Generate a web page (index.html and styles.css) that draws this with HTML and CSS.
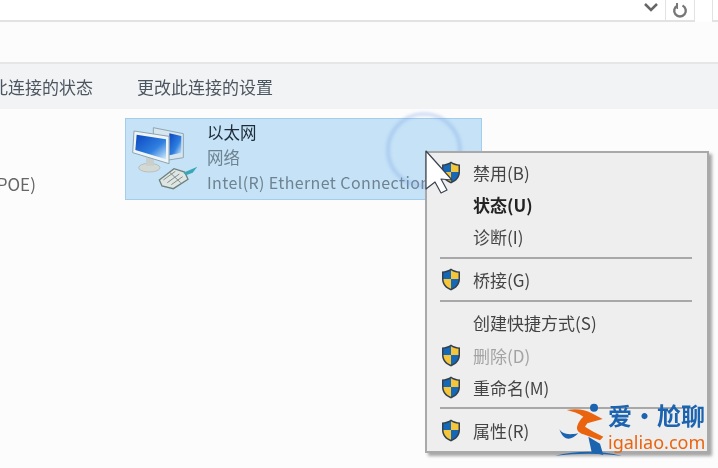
FILE: index.html
```html
<!DOCTYPE html>
<html>

<head>
    <meta charset="utf-8">
    <title>网络连接</title>
    <link rel="stylesheet" href="styles.css">
</head>

<body>
    <svg class="defs" width="0" height="0">
        <defs>
            <linearGradient id="screen" x1="0" y1="0" x2="1" y2="1">
                <stop offset="0" stop-color="#0b47c0" />
                <stop offset="0.6" stop-color="#2f7fe0" />
                <stop offset="1" stop-color="#d5ecfa" />
            </linearGradient>
            <symbol id="shield" viewBox="0 0 20 23">
                <path d="M10 .6C7.500 2.400 4.500 3.400 1 3.600V11c0 5.600 3.600 9.400 9 11.400 5.400-2 9-5.800 9-11.400V3.600C15.500 3.400 12.500 2.400 10 .6z" fill="#33404c" />
                <path d="M10 2.200C8 3.500 5.500 4.400 2.500 4.800V11H10z" fill="#1568b8" />
                <path d="M10 2.200C12 3.500 14.500 4.400 17.500 4.800V11H10z" fill="#f5c63a" />
                <path d="M2.500 11H10v9.700C5.500 19 2.700 15.800 2.500 11z" fill="#f5c63a" />
                <path d="M17.500 11H10v9.700C14.500 19 17.300 15.800 17.500 11z" fill="#1568b8" />
            </symbol>
        </defs>
    </svg>

    <div class="page">
        <header class="address">
            <div class="address-box">
                <svg class="chevron" width="16" height="10" viewBox="0 0 16 10">
                    <path d="M2 2l6 6 6-6" fill="none" stroke="#666" stroke-width="2.500" />
                </svg>
                <div class="refresh">
                    <svg width="16" height="16" viewBox="0 0 16 16">
                        <path d="M10.500 2.500a5.800 5.800 0 1 1-5 0" fill="none" stroke="#777" stroke-width="2.400" />
                        <path d="M5 0v5h-.5" fill="none" stroke="#777" stroke-width="2" />
                    </svg>
                </div>
            </div>
            <div class="search-box"></div>
        </header>

        <nav class="commands">
            <span class="command">查看此连接的状态</span>
            <span class="command">更改此连接的设置</span>
        </nav>

        <main class="connections">
            <div class="tile-left">(POE)</div>
            <div class="tile">
                <svg class="net-icon" width="72" height="72" viewBox="24 9 216 216">
                    <path d="M100 35l90 18v72l-50 8-40-30z" fill="#d7e6ee" stroke="#8fa6b4" stroke-width="3" />
                    <path d="M148 52l36 8v50l-36 8z" fill="url(#screen)" />
                    <ellipse cx="88" cy="155" rx="32" ry="13" fill="#d5d9d4" stroke="#a7b0ad" stroke-width="2" />
                    <path d="M78 125h24v24H78z" fill="#c9cfcd" />
                    <path d="M42 45l105 16v82L38 110z" fill="#eef5f8" stroke="#8ea3b0" stroke-width="3" />
                    <path d="M50 56l88 14v60L46 102z" fill="url(#screen)" />
                    <path d="M118 192l44-34 32 10 10 22-44 28-34-8z" fill="#dfe5e2" stroke="#6f807c" stroke-width="4" />
                    <path d="M130 192l36-26M142 200l36-26M154 206l34-24M150 170l32 30" stroke="#7f908c" stroke-width="3" fill="none" />
                    <path d="M190 170l42-18-14 18-20 8z" fill="#3aa7b8" />
                </svg>
                <div class="tile-text">
                    <div class="tile-name">以太网</div>
                    <div class="tile-sub">网络</div>
                    <div class="tile-sub tile-device">Intel(R) Ethernet Connection</div>
                </div>
            </div>
        </main>

        <div class="click-ring"></div>

        <ul class="menu">
            <li class="item"><svg class="shield"><use href="#shield" /></svg>禁用(B)</li>
            <li class="item bold"><span class="no-icon"></span>状态(U)</li>
            <li class="item"><span class="no-icon"></span>诊断(I)</li>
            <li class="sep"></li>
            <li class="item"><svg class="shield"><use href="#shield" /></svg>桥接(G)</li>
            <li class="sep"></li>
            <li class="item"><span class="no-icon"></span>创建快捷方式(S)</li>
            <li class="item disabled"><svg class="shield"><use href="#shield" /></svg>删除(D)</li>
            <li class="item"><svg class="shield"><use href="#shield" /></svg>重命名(M)</li>
            <li class="sep"></li>
            <li class="item"><svg class="shield"><use href="#shield" /></svg>属性(R)</li>
        </ul>

        <svg class="cursor" width="34" height="48" viewBox="0 0 34 48">
            <path d="M2 1l26 29-11-1 6 11-6 3-6-11-9 7z" fill="#fff" stroke="#3a4450" stroke-width="1.200" stroke-linejoin="round" />
        </svg>

        <div class="watermark">
            <svg class="wm-logo" width="90" height="73" viewBox="0 0 270 219">
                <circle cx="132" cy="38" r="12" fill="#1c63b0" />
                <path d="M50 45C75 40 105 42 125 55L158 72 112 85 105 95 130 110 160 125 150 136 100 118C85 112 78 105 82 92 86 80 92 72 100 65 85 54 68 50 50 45z" fill="#ea6410" />
                <path d="M28 103C36 114 48 122 85 115 72 128 60 134 48 130 40 126 32 116 28 103z" fill="#1c63b0" />
                <path d="M115 125L150 146 160 180 125 172z" fill="#1c63b0" />
                <path d="M15 182C80 166 150 166 215 182 150 174 80 174 15 182z" fill="#1c63b0" />
            </svg>
            <div class="wm-text">
                <div class="wm-name">爱 · 尬聊</div>
                <div class="wm-url">igaliao.com</div>
            </div>
        </div>
    </div>
</body>

</html>
```

FILE: styles.css
```css
html,
body {
    margin: 0;
    padding: 0;
    width: 100%;
    height: 100%;
    overflow: hidden;
}

body {
    background-color: #fcfcfc;
    color: #444;
    font-family: "Noto Sans CJK SC", "Noto Sans", sans-serif;
}

.defs {
    position: absolute;
}

.page {
    position: relative;
    width: 718px;
    height: 468px;
    overflow: hidden;
    filter: blur(0.45px);
}

.address {
    display: flex;
    height: 22px;
    background-color: #fff;
}

.address-box {
    display: flex;
    justify-content: flex-end;
    width: 694px;
    height: 20px;
    border-right: 1px solid #e2e2e2;
    border-bottom: 2px solid #e2e2e2;
}

.chevron {
    margin: 2px 6px 0 0;
}

.refresh {
    width: 28px;
    height: 20px;
    border-left: 1px solid #e2e2e2;
    text-align: center;
}

.search-box {
    width: 5px;
    height: 20px;
    margin-left: auto;
    border-left: 1px solid #e2e2e2;
    border-bottom: 2px solid #e2e2e2;
}

.commands {
    display: flex;
    gap: 44px;
    align-items: center;
    height: 45px;
    margin-top: 40px;
    margin-left: -43px;
    background-color: #f1f3f5;
    border-top: 2px solid #e6e6e6;
    font-size: 17px;
    line-height: 42px;
    color: #4c5660;
}

.connections {
    display: flex;
    padding-top: 9px;
}

.tile-left {
    width: 134px;
    margin-left: -9px;
    padding-top: 54px;
    font-size: 17px;
    line-height: 24px;
    color: #666;
}

.tile {
    display: flex;
    width: 355px;
    height: 80px;
    overflow: hidden;
    background-color: #c5e2f7;
    border: 1px solid #a2cdec;
}

.net-icon {
    flex: none;
    margin: 0 7px 0 2px;
}

.tile-text {
    padding-top: 1px;
    white-space: nowrap;
}

.tile-name,
.tile-sub {
    height: 25px;
    font-size: 16.500px;
    line-height: 25px;
    color: #1d2b38;
}

.tile-sub {
    color: #6f8290;
}

.tile-device {
    font-size: 16px;
    letter-spacing: 0.4px;
}

.click-ring {
    position: absolute;
    left: 386px;
    top: 112px;
    width: 68px;
    height: 68px;
    border: 4px solid rgba(120, 160, 225, 0.3);
    border-radius: 50%;
    filter: blur(1.5px);
}

.menu {
    position: absolute;
    left: 425px;
    top: 151px;
    width: 280px;
    height: 295px;
    margin: 0;
    padding: 3px 0 0;
    list-style: none;
    background-color: #eeeeee;
    border: 2px solid #a9a9a9;
    box-shadow: 3px 3px 3px rgba(0, 0, 0, 0.35);
    font-size: 17px;
    color: #444;
}

.item {
    display: flex;
    align-items: center;
    height: 32.200px;
    padding-left: 14px;
    white-space: nowrap;
}

.shield,
.no-icon {
    flex: none;
    width: 20px;
    height: 23px;
    margin-right: 12px;
}

.bold {
    font-weight: 700;
    color: #222;
}

.disabled {
    color: #a3a3a3;
}

.sep {
    height: 2px;
    margin: 4px 15px 5px 13px;
    background-color: #a8a8a8;
}

.cursor {
    position: absolute;
    left: 424px;
    top: 150px;
}

.watermark {
    position: absolute;
    left: 550px;
    top: 395px;
    display: flex;
}

.wm-logo {
    flex: none;
}

.wm-text {
    margin-left: -32px;
    padding-top: 4px;
    white-space: nowrap;
}

.wm-name {
    font-size: 24px;
    line-height: 32px;
    font-weight: 700;
    word-spacing: -5px;
    color: #1c63b0;
}

.wm-url {
    margin-top: -1px;
    font-family: "Noto Sans", sans-serif;
    font-size: 18px;
    line-height: 24px;
    color: #ea6410;
}
```
